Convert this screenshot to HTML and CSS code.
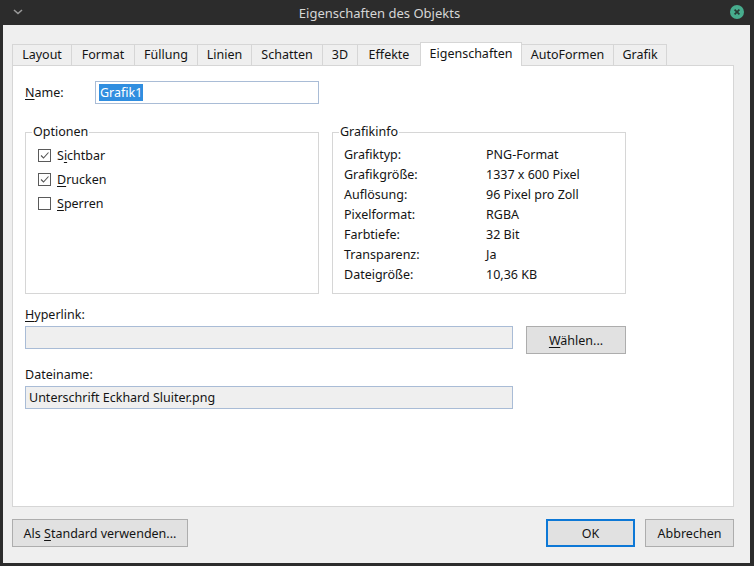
FILE: index.html
```html
<!DOCTYPE html>
<html lang="de">
<head>
<meta charset="utf-8">
<title>Eigenschaften des Objekts</title>
<link rel="stylesheet" href="styles.css">
</head>
<body>
<div class="window">
  <div class="titlebar">
    <svg class="chev" width="10" height="6" viewBox="0 0 10 6"><path d="M1 1 L5 4.5 L9 1" fill="none" stroke="#9a9a9a" stroke-width="1.6"/></svg>
    <div class="title">Eigenschaften des Objekts</div>
    <svg class="close" width="14" height="14" viewBox="0 0 14 14"><circle cx="7" cy="7" r="7" fill="#47ac8d"/><path d="M4.6 4.6 L9.4 9.4 M9.4 4.6 L4.6 9.4" stroke="#263a33" stroke-width="1.7"/></svg>
  </div>
  <div class="dialog">
    <div class="tabs">
      <div class="tab w59">Layout</div>
      <div class="tab w63">Format</div>
      <div class="tab w63">Füllung</div>
      <div class="tab w54">Linien</div>
      <div class="tab w71">Schatten</div>
      <div class="tab w35">3D</div>
      <div class="tab w63">Effekte</div>
      <div class="tab w101 active">Eigenschaften</div>
      <div class="tab w92">AutoFormen</div>
      <div class="tab w54 last">Grafik</div>
    </div>
    <div class="panel">
      <div class="name-row">
        <span class="name-label"><u>N</u>ame:</span>
        <div class="input name-input"><span class="sel">Grafik1</span></div>
      </div>
      <div class="groups">
        <fieldset class="group">
          <legend>Optionen</legend>
          <div class="checks">
            <div class="check"><span class="box"><svg width="11" height="11" viewBox="0 0 11 11"><path d="M2 5.5 L4.5 8 L9.5 2.5" fill="none" stroke="#555" stroke-width="1.1"/></svg></span><span>S<u>i</u>chtbar</span></div>
            <div class="check"><span class="box"><svg width="11" height="11" viewBox="0 0 11 11"><path d="M2 5.5 L4.5 8 L9.5 2.5" fill="none" stroke="#555" stroke-width="1.1"/></svg></span><span><u>D</u>rucken</span></div>
            <div class="check"><span class="box"></span><span><u>S</u>perren</span></div>
          </div>
        </fieldset>
        <fieldset class="group">
          <legend>Grafikinfo</legend>
          <div class="info">
            <span>Grafiktyp:</span><span>PNG-Format</span>
            <span>Grafikgröße:</span><span>1337 x 600 Pixel</span>
            <span>Auflösung:</span><span>96 Pixel pro Zoll</span>
            <span>Pixelformat:</span><span>RGBA</span>
            <span>Farbtiefe:</span><span>32 Bit</span>
            <span>Transparenz:</span><span>Ja</span>
            <span>Dateigröße:</span><span>10,36 KB</span>
          </div>
        </fieldset>
      </div>
      <div class="field-label hyper-label"><u>H</u>yperlink:</div>
      <div class="hyper-row">
        <div class="input wide grey"></div>
        <div class="btn choose"><span><u>W</u>ählen...</span></div>
      </div>
      <div class="field-label file-label">Dateiname:</div>
      <div class="input wide grey">Unterschrift Eckhard Sluiter.png</div>
    </div>
    <div class="footer">
      <div class="btn std"><span>Als <u>S</u>tandard verwenden...</span></div>
      <div class="spacer"></div>
      <div class="btn ok"><span>OK</span></div>
      <div class="btn cancel"><span>Abbrechen</span></div>
    </div>
  </div>
</div>
</body>
</html>
```

FILE: styles.css
```css
html, body {
  margin: 0;
  padding: 0;
  background: #2c2c2c;
}
body {
  font-family: "Noto Sans", "Open Sans", sans-serif;
  font-size: 12.5px;
  color: #141414;
}
u {
  text-decoration: underline;
  text-underline-offset: 2px;
}
.window {
  width: 754px;
  height: 566px;
  display: flex;
  flex-direction: column;
}
.titlebar {
  height: 25px;
  flex: none;
  display: flex;
  align-items: center;
  background: #2c2c2c;
  padding: 0 10px 0 13px;
}
.chev {
  flex: none;
  margin-top: -2px;
}
.title {
  flex: 1;
  text-align: center;
  color: #d6d6d6;
  font-size: 13px;
  padding-left: 6px;
}
.close {
  flex: none;
  margin-top: -1px;
}
.dialog {
  flex: none;
  height: 538px;
  margin: 0 4px 0 3px;
  background: #efefef;
  display: flex;
  flex-direction: column;
  padding: 19px 16px 16px 9px;
  box-sizing: border-box;
}
.tabs {
  display: flex;
  height: 21px;
  flex: none;
  position: relative;
  z-index: 1;
}
.tab {
  box-sizing: border-box;
  height: 21px;
  border: 1px solid #d6d6d6;
  border-right: none;
  border-bottom: none;
  background: #efefef;
  text-align: center;
  line-height: 20px;
}
.tab.last {
  border-right: 1px solid #d6d6d6;
}
.tab.active {
  background: #fff;
  height: 24px;
  margin-top: -2px;
  line-height: 22px;
  border-right: 1px solid #d6d6d6;
  margin-right: -1px;
}
.w59 { width: 59px; }
.w63 { width: 63px; }
.w54 { width: 54px; }
.w71 { width: 71px; }
.w35 { width: 35px; }
.w101 { width: 102px; }
.w92 { width: 92px; }
.panel {
  flex: 1;
  background: #fff;
  border: 1px solid #d6d6d6;
  padding: 15px 0 0 12px;
  box-sizing: border-box;
}
.name-row {
  display: flex;
  align-items: center;
  height: 23px;
}
.name-label {
  width: 70px;
  flex: none;
}
.input {
  box-sizing: border-box;
  height: 23px;
  border: 1px solid #a9bcd6;
  background: #fff;
  padding: 0 3px;
  line-height: 21px;
}
.name-input {
  width: 224px;
}
.sel {
  background: #308ee0;
  color: #fff;
  display: inline-block;
  line-height: 17px;
  padding: 0 1px;
}
.groups {
  display: flex;
  gap: 13px;
  margin-top: 20px;
}
.group {
  margin: 0;
  width: 294px;
  height: 170px;
  box-sizing: border-box;
  border: 1px solid #d6d6d6;
  padding: 0;
}
.group legend {
  padding: 0 1px;
  margin-left: 6px;
  line-height: 16px;
}
.checks {
  display: flex;
  flex-direction: column;
  gap: 8px;
  padding: 7px 0 0 12px;
}
.check {
  display: flex;
  align-items: center;
  height: 16px;
  gap: 6px;
}
.box {
  box-sizing: border-box;
  width: 13px;
  height: 13px;
  border: 1px solid #5a5a5a;
  display: flex;
  align-items: center;
  justify-content: center;
  background: #fff;
}
.info {
  display: grid;
  grid-template-columns: 142px auto;
  grid-auto-rows: 20px;
  align-items: center;
  padding: 4px 0 0 11px;
}
.field-label {
  line-height: 16px;
}
.hyper-label {
  margin-top: 13px;
}
.hyper-row {
  display: flex;
  align-items: flex-start;
  gap: 13px;
  margin-top: 3px;
}
.wide {
  width: 488px;
}
.grey {
  background: #efefef;
}
.btn {
  box-sizing: border-box;
  border: 1px solid #adadad;
  background: #e1e1e1;
  display: flex;
  align-items: center;
  justify-content: center;
}
.choose {
  width: 100px;
  height: 28px;
}
.file-label {
  margin-top: 13px;
  margin-bottom: 3px;
}
.footer {
  display: flex;
  flex: none;
  margin-top: 12px;
  gap: 10px;
  height: 28px;
}
.spacer {
  flex: 1;
}
.std {
  width: 176px;
}
.ok {
  width: 89px;
  border: 2px solid #0d78d6;
}
.cancel {
  width: 89px;
}
```
